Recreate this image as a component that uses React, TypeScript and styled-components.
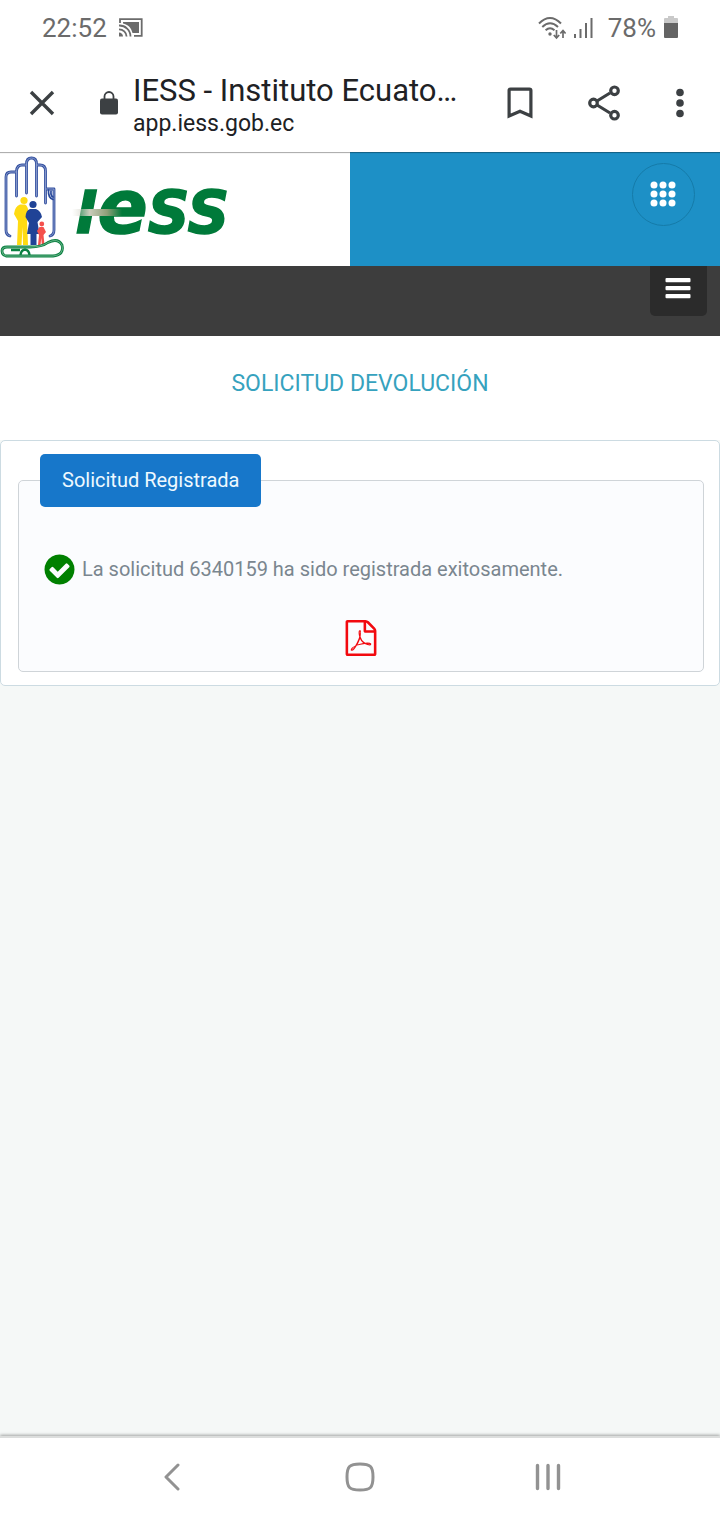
import React from 'react';
import styled, { createGlobalStyle } from 'styled-components';

const GlobalStyle = createGlobalStyle`
  *, *::before, *::after { box-sizing: border-box; }
  body {
    margin: 0;
    background: #f5f8f7;
    font-family: Roboto, "Liberation Sans", sans-serif;
  }
  button { font: inherit; }
`;

const Screen = styled.div`
  min-height: 100vh;
  display: flex;
  flex-direction: column;
`;

const StatusBar = styled.div`
  display: flex;
  justify-content: space-between;
  align-items: center;
  height: 56px;
  padding: 0 42px;
  background: #fff;
  color: #6b6b6b;
  font-size: 26px;
`;

const StatusGroup = styled.div<{ $gap: number }>`
  display: flex;
  align-items: center;
  gap: ${(p) => p.$gap}px;
`;

const Toolbar = styled.header`
  display: flex;
  align-items: center;
  height: 96px;
  padding: 0 6px 2px 20px;
  background: #fff;
  color: #3c4043;
`;

const IconButton = styled.button`
  display: flex;
  align-items: center;
  justify-content: center;
  width: 44px;
  height: 44px;
  flex: none;
  padding: 0;
  border: 0;
  background: none;
  color: inherit;
`;

const Site = styled.div`
  display: flex;
  align-items: center;
  flex: 1;
  min-width: 0;
  gap: 15px;
  margin: 0 16px 0 36px;
  color: #202124;
`;

const SiteText = styled.div`
  min-width: 0;
  padding-top: 6px;
`;

const PageTitle = styled.div`
  font-size: 31px;
  line-height: 36px;
  white-space: nowrap;
`;

const PageUrl = styled.div`
  font-size: 23px;
  line-height: 30px;
`;

const Actions = styled.div`
  display: grid;
  grid-template-columns: 84px 84px 68px;
  justify-items: center;
`;

const Banner = styled.div`
  display: flex;
  height: 114px;
  background: #1d90c6;
  box-shadow: inset 0 2px 1px -1px rgba(0, 0, 0, 0.35);
`;

const LogoPanel = styled.a`
  display: block;
  width: 350px;
  background: #fff;
  box-shadow: inset 0 2px 1px -1px rgba(0, 0, 0, 0.35);
`;

const BannerTools = styled.div`
  flex: 1;
  display: flex;
  justify-content: flex-end;
  padding: 11px 25px 0 0;
`;

const AppsButton = styled.button`
  display: flex;
  align-items: center;
  justify-content: center;
  width: 63px;
  height: 63px;
  padding: 0 1px 1px 0;
  border: 1px solid #157ba9;
  border-radius: 50%;
  background: none;
  color: #fff;
`;

const MenuBar = styled.nav`
  display: flex;
  justify-content: flex-end;
  align-items: flex-start;
  height: 70px;
  padding-right: 13px;
  background: #3d3d3d;
`;

const MenuButton = styled.button`
  display: flex;
  justify-content: center;
  width: 57px;
  height: 50px;
  padding: 12px 1px 0 0;
  border: 0;
  border-radius: 0 0 5px 5px;
  background: #2b2b2b;
  color: #fff;
`;

const Heading = styled.h1`
  margin: 0;
  padding: 32px 16px 40px;
  background: #fff;
  color: #36a2be;
  font-size: 23px;
  line-height: 32px;
  font-weight: 400;
  text-align: center;
`;

const Main = styled.main`
  flex: 1;
`;

const Card = styled.section`
  padding: 13px 15px 13px 17px;
  border: 1px solid #ccdbe2;
  border-radius: 5px;
  background: #fff;
`;

const Panel = styled.fieldset`
  min-width: 0;
  margin: 0;
  padding: 0 21px 15px;
  border: 1px solid #cfd4d8;
  border-radius: 5px;
  background: #fbfcfe;
`;

const PanelTitle = styled.legend`
  padding: 0 22px;
  border-radius: 5px;
  background: #1777ca;
  color: #eef9ff;
  font-size: 20px;
  line-height: 53px;
`;

const Message = styled.p`
  display: flex;
  align-items: center;
  gap: 5px;
  margin: 44px 0 0 2px;
  color: #7a868f;
  font-size: 20px;
  line-height: 36px;
`;

const PdfLink = styled.a`
  display: flex;
  width: 36px;
  margin: 33px auto 0;
  color: #f2090f;
`;

const NavBar = styled.nav`
  display: flex;
  justify-content: space-around;
  align-items: center;
  height: 84px;
  padding: 0 78px 5px;
  border-top: 2px solid #dcdedd;
  background: #fff;
  color: #929292;
  box-shadow: 0 -1px 3px rgba(0, 0, 0, 0.35);
`;

const CastIcon = () => (
  <svg width="24" height="20" viewBox="0 0 24 20" fill="none" stroke="currentColor" aria-hidden="true">
    <path d="M1 5V1.200H22.700V17.800H15" strokeWidth="1.800" />
    <path d="M4 4H20V15H13.500C12 9.500 9 6.500 4 5.500Z" fill="currentColor" stroke="none" />
    <path d="M0 7.500A11 11 0 0 1 11.500 18.500M0 11.300A7.500 7.500 0 0 1 7.600 18.500" strokeWidth="1.800" />
    <path d="M0 14.500A4 4 0 0 1 4 18.600H0Z" fill="currentColor" stroke="none" />
  </svg>
);

const WifiIcon = () => (
  <svg width="28" height="24" viewBox="0 0 28 24" fill="none" stroke="currentColor" strokeWidth="2" aria-hidden="true">
    <path d="M1 7.500Q12 -3.500 23 7.500M4.300 11Q12 3.500 20 11M7.600 14.200Q12 10.300 16.500 14.200" />
    <circle cx="12" cy="18" r="1.700" fill="currentColor" stroke="none" />
    <path d="M18.500 14V22M15.800 19L18.500 22L21.200 19M25 22V15M22.300 17.500L25 14.500L27.600 17.500" strokeWidth="1.700" />
  </svg>
);

const SignalIcon = () => (
  <svg width="19" height="22" viewBox="0 0 19 22" fill="currentColor" aria-hidden="true">
    <rect x="0" y="17" width="2" height="4" />
    <rect x="5.500" y="12" width="2" height="9" />
    <rect x="11" y="6" width="2" height="15" />
    <rect x="16.500" y="1" width="2" height="20" />
  </svg>
);

const BatteryIcon = () => (
  <svg width="14" height="24" viewBox="0 0 14 24" aria-hidden="true">
    <path d="M4 0H10V2H13Q14 2 14 3V7H0V3Q0 2 1 2H4Z" fill="#c9c9c9" />
    <path d="M0 7H14V21Q14 22 13 22H1Q0 22 0 21Z" fill="#646464" />
  </svg>
);

const CloseIcon = () => (
  <svg width="26" height="26" viewBox="0 0 26 26" stroke="currentColor" strokeWidth="3.400" aria-hidden="true">
    <path d="M2 2L24 24M24 2L2 24" />
  </svg>
);

const LockIcon = () => (
  <svg width="18" height="24" viewBox="0 0 18 24" fill="none" aria-label="Sitio seguro" role="img">
    <rect x="0" y="7.500" width="18" height="16" rx="2" fill="#3c4043" />
    <path d="M4.500 9V5.500A4.500 4.500 0 0 1 13.500 5.500V9" stroke="#3c4043" strokeWidth="1.800" />
  </svg>
);

const BookmarkIcon = () => (
  <svg width="26" height="32" viewBox="0 0 26 32" fill="none" stroke="currentColor" strokeWidth="3.200" aria-hidden="true">
    <path d="M2.100 29V3.600Q2.100 2.100 3.600 2.100H22.400Q23.900 2.100 23.900 3.600V29L13 24.300Z" />
  </svg>
);

const ShareIcon = () => (
  <svg width="34" height="36" viewBox="0 0 34 36" fill="none" stroke="currentColor" strokeWidth="3.200" aria-hidden="true">
    <path d="M10 16L23 8M10 20L23 28" />
    <circle cx="6.500" cy="18" r="3.800" />
    <circle cx="27.500" cy="5.800" r="3.800" />
    <circle cx="27.500" cy="30.200" r="3.800" />
  </svg>
);

const MoreIcon = () => (
  <svg width="8" height="30" viewBox="0 0 8 30" fill="currentColor" aria-hidden="true">
    <circle cx="4" cy="4.500" r="3.800" />
    <circle cx="4" cy="15" r="3.800" />
    <circle cx="4" cy="25.500" r="3.800" />
  </svg>
);

const GridIcon = () => (
  <svg width="26" height="26" viewBox="0 0 26 26" fill="currentColor" aria-hidden="true">
    {[4, 13, 22].map((y) => [4, 13, 22].map((x) => <circle key={`${x}-${y}`} cx={x} cy={y} r="3.500" />))}
  </svg>
);

const MenuIcon = () => (
  <svg width="26" height="22" viewBox="0 0 26 22" fill="currentColor" aria-hidden="true">
    {[0, 8, 16].map((y) => (
      <rect key={y} x="0.500" y={y} width="25" height="4.300" rx="1" />
    ))}
  </svg>
);

const CheckIcon = () => (
  <svg width="35" height="35" viewBox="0 0 1792 1792" fill="#008000" aria-hidden="true">
    <path d="M1412 734q0-28-18-46l-91-90q-19-19-45-19t-45 19l-408 407-226-226q-19-19-45-19t-45 19l-91 90q-18 18-18 46 0 27 18 45l362 362q19 19 45 19 27 0 46-19l543-543q18-18 18-45zm252 162q0 209-103 385.500t-279.500 279.500-385.500 103-385.500-103-279.500-279.500-103-385.500 103-385.500 279.500-279.500 385.500-103 385.500 103 279.500 279.500 103 385.500z" />
  </svg>
);

const PdfIcon = () => (
  <svg width="36" height="36" viewBox="0 0 1792 1792" fill="currentColor" aria-hidden="true">
    <path d="M1596 380q28 28 48 76t20 88v1152q0 40-28 68t-68 28h-1344q-40 0-68-28t-28-68v-1600q0-40 28-68t68-28h896q40 0 88 20t76 48zm-444-244v376h376q-10-29-22-41l-313-313q-12-12-41-22zm384 1528v-1024h-416q-40 0-68-28t-28-68v-416h-768v1536h1280zm-514-593q33 26 84 56 59-7 117-7 147 0 177 49 16 22 2 52 0 1-1 2l-2 2v1q-6 38-71 38-48 0-115-20t-130-53q-221 24-392 83-153 262-242 262-15 0-28-7l-24-12q-1-1-6-5-10-10-6-36 9-40 56-91.500t132-96.500q14-9 23 6 2 2 2 4 52-85 107-197 68-136 104-262-24-82-30.500-159.500t6.500-127.500q11-40 42-40h22q23 0 35 15 18 21 9 68-2 6-4 8 1 3 1 8v30q-2 123-14 192 55 164 146 238zm-576 411q52-24 137-158-51 40-87.500 84t-49.500 74zm398-920q-15 42-2 132 1-7 7-44 0-3 7-43 1-4 4-8-1-1-1-2-1-2-1-3-1-22-13-36 0 1-1 2v2zm-124 661q135-54 284-81-2-1-13-9.500t-16-13.500q-76-67-127-176-27 86-83 197-30 56-45 83zm646-16q-24-24-140-24 76 28 124 28 14 0 18-1 0-1-2-3z" />
  </svg>
);

const HAND =
  'M10 84Q6 83 6 78V25Q6 20 11 20H16M16.500 44V19Q17 13 22 13H26M26.500 41V12Q26.500 6 31.500 6Q36.500 6 36.500 12V44M37 13H40Q45.500 13 45.500 19V51M46 37H54V78Q54 83 50 84';
const SCROLL =
  'M2 99Q2 95 7 95H30Q42 95 48 90.500Q58 85.500 62 93Q64.500 103 53 104H6Q2 103 2 99Z';

const Logo = () => (
  <svg width="260" height="114" viewBox="0 0 260 114" fill="none" aria-hidden="true">
    <defs>
      <linearGradient id="streak" x1="72" x2="122" y1="0" y2="0" gradientUnits="userSpaceOnUse">
        <stop offset="0" stopColor="#d8d8cc" stopOpacity="0" />
        <stop offset="0.350" stopColor="#c9ccba" />
        <stop offset="0.700" stopColor="#8f9f78" />
        <stop offset="1" stopColor="#007a3a" />
      </linearGradient>
    </defs>
    {/* hand with the fingers outlined */}
    <g strokeLinecap="round" strokeLinejoin="round">
      <path stroke="#3350a0" strokeWidth="2.800" d={HAND} />
      <path stroke="#a9b7dc" strokeWidth="0.700" d={HAND} />
      <path stroke="#27489b" strokeWidth="1.700" d="M48.500 38Q48 46 53 47.500M51 39Q50.500 44 53 45" />
    </g>
    {/* family inside the palm */}
    <g fill="#ffdb12">
      <circle cx="24" cy="48.500" r="3.600" />
      <path d="M20 52.500H25Q28 54 28.500 60L27 68L28 93H23L22.500 75L21.500 93H17L18 69L14 62Q15 54 20 52.500Z" />
    </g>
    <g fill="#204396">
      <circle cx="33" cy="52.500" r="3.600" />
      <path d="M30 57H36Q41 59 42 65L37.500 70L39.500 82H36.500V93H30.500V82H27L29 71L25.500 65Q26 58 30 57Z" />
    </g>
    <g fill="#f4504d">
      <circle cx="41.800" cy="72" r="2.400" />
      <path d="M39.500 75H43.500L46 80L43.500 83L44.500 93H41.800L41.300 86L40.500 93H38L39 83L37 79Z" />
    </g>
    {/* green scroll below the hand */}
    <path stroke="#0b8141" strokeWidth="2.800" d={SCROLL} />
    <path stroke="#a5d3b8" strokeWidth="0.600" d={SCROLL} />
    <path stroke="#0b8141" strokeWidth="2.400" d="M20.500 103Q21 98 25 97.500Q29 98 29.500 103M11 98H20" />
    <text
      x="76"
      y="81"
      fill="#007a3a"
      stroke="#007a3a"
      strokeWidth="1.500"
      fontFamily="DejaVu Sans, sans-serif"
      fontSize="58"
      fontWeight="700"
      fontStyle="italic"
    >
      I<tspan fontSize="74">e</tspan>SS
    </text>
    <rect x="72" y="57" width="50" height="7" fill="url(#streak)" />
  </svg>
);

const BackIcon = () => (
  <svg width="18" height="28" viewBox="0 0 18 28" fill="none" stroke="currentColor" strokeWidth="3" strokeLinecap="round" strokeLinejoin="round" aria-hidden="true">
    <path d="M15 2L3 14L15 26" />
  </svg>
);

const HomeIcon = () => (
  <svg width="30" height="30" viewBox="0 0 30 30" fill="none" stroke="currentColor" strokeWidth="3" aria-hidden="true">
    <path d="M2 15C2 4.500 4.500 2 15 2S28 4.500 28 15S25.500 28 15 28S2 25.500 2 15Z" />
  </svg>
);

const RecentsIcon = () => (
  <svg width="28" height="28" viewBox="0 0 28 28" stroke="currentColor" strokeWidth="3.400" strokeLinecap="round" aria-hidden="true">
    <path d="M3.500 2.500V25.500M14 2.500V25.500M24.500 2.500V25.500" />
  </svg>
);

export default function App() {
  return (
    <>
      <GlobalStyle />
      <Screen>
        <StatusBar>
          <StatusGroup $gap={12}>
            <span>22:52</span>
            <CastIcon />
          </StatusGroup>
          <StatusGroup $gap={8}>
            <WifiIcon />
            <SignalIcon />
            <StatusGroup $gap={8}>
              <span>&nbsp;78%</span>
              <BatteryIcon />
            </StatusGroup>
          </StatusGroup>
        </StatusBar>

        <Toolbar>
          <IconButton type="button" aria-label="Cerrar"><CloseIcon /></IconButton>
          <Site>
            <LockIcon />
            <SiteText>
              <PageTitle>IESS - Instituto Ecuato…</PageTitle>
              <PageUrl>app.iess.gob.ec</PageUrl>
            </SiteText>
          </Site>
          <Actions>
            <IconButton type="button" aria-label="Guardar"><BookmarkIcon /></IconButton>
            <IconButton type="button" aria-label="Compartir"><ShareIcon /></IconButton>
            <IconButton type="button" aria-label="Más opciones"><MoreIcon /></IconButton>
          </Actions>
        </Toolbar>

        <Banner>
          <LogoPanel href="#" aria-label="IESS"><Logo /></LogoPanel>
          <BannerTools>
            <AppsButton type="button" aria-label="Aplicaciones"><GridIcon /></AppsButton>
          </BannerTools>
        </Banner>
        <MenuBar>
          <MenuButton type="button" aria-label="Menú"><MenuIcon /></MenuButton>
        </MenuBar>

        <Main>
          <Heading>SOLICITUD DEVOLUCIÓN</Heading>
          <Card>
            <Panel>
              <PanelTitle>Solicitud Registrada</PanelTitle>
              <Message>
                <CheckIcon />
                <span>La solicitud 6340159 ha sido registrada exitosamente.</span>
              </Message>
              <PdfLink href="#" aria-label="Descargar PDF"><PdfIcon /></PdfLink>
            </Panel>
          </Card>
        </Main>

        <NavBar>
          <IconButton type="button" aria-label="Atrás"><BackIcon /></IconButton>
          <IconButton type="button" aria-label="Inicio"><HomeIcon /></IconButton>
          <IconButton type="button" aria-label="Recientes"><RecentsIcon /></IconButton>
        </NavBar>
      </Screen>
    </>
  );
}
